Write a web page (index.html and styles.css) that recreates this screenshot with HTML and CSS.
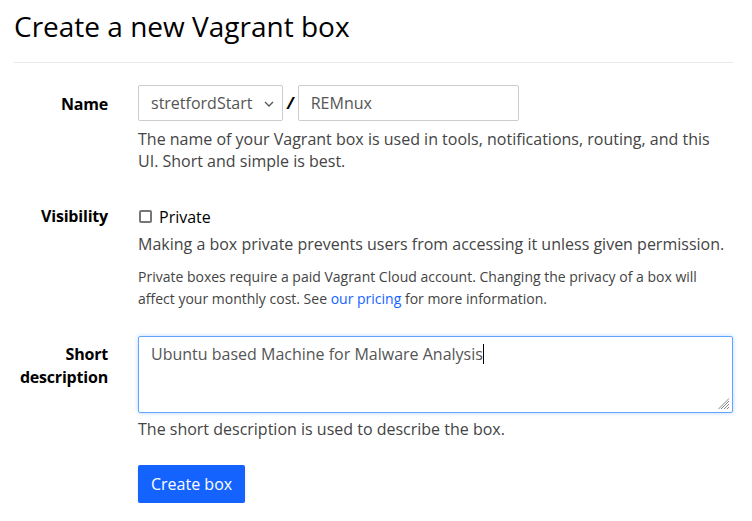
FILE: index.html
```html
<!DOCTYPE html>
<html lang="en">
<head>
<meta charset="utf-8">
<title>Create a new Vagrant box</title>
<link rel="stylesheet" href="styles.css">
</head>
<body>
<div class="page">
  <h1 class="title">Create a new Vagrant box</h1>
  <hr class="rule">
  <form class="form">
    <div class="row row-name">
      <label class="label">Name</label>
      <div class="field">
        <div class="name-inputs">
          <div class="select">
            <span>stretfordStart</span>
            <svg class="chev" width="10" height="6" viewBox="0 0 10 6"><path d="M1 1l4 4 4-4" fill="none" stroke="#555" stroke-width="1.3"/></svg>
          </div>
          <span class="slash">/</span>
          <div class="input">REMnux</div>
        </div>
        <p class="help">The name of your Vagrant box is used in tools, notifications, routing, and this UI. Short and simple is best.</p>
      </div>
    </div>
    <div class="row row-vis">
      <label class="label">Visibility</label>
      <div class="field">
        <div class="check"><span class="box"></span><span class="check-text">Private</span></div>
        <p class="help">Making a box private prevents users from accessing it unless given permission.</p>
        <p class="small">Private boxes require a paid Vagrant Cloud account. Changing the privacy of a box will affect your monthly cost. See <a class="link" href="#">our pricing</a> for more information.</p>
      </div>
    </div>
    <div class="row row-desc">
      <label class="label">Short description</label>
      <div class="field">
        <div class="textarea"><span>Ubuntu based Machine for Malware Analysis</span><span class="caret"></span>
          <svg class="grip" width="12" height="12" viewBox="0 0 12 12"><path d="M11 3L3 11M11 6L6 11M11 9L9 11M11 0.5L0.5 11" stroke="#888" stroke-width="1"/></svg>
        </div>
        <p class="help">The short description is used to describe the box.</p>
        <button class="btn" type="button">Create box</button>
      </div>
    </div>
  </form>
</div>
</body>
</html>
```

FILE: styles.css
```css
html, body {
  margin: 0;
  padding: 0;
  background: #fff;
}
body {
  font-family: "Open Sans", "Liberation Sans", sans-serif;
  color: #1f2124;
}
.page {
  padding: 0 19px 0 14px;
}
.title {
  margin: 0;
  padding-top: 7px;
  font-size: 28px;
  font-weight: 400;
  line-height: 38px;
  color: #000;
}
.rule {
  margin: 17px 0 0;
  border: 0;
  border-top: 1px solid #e8e8e8;
}
.form {
  padding-top: 22px;
}
.row {
  display: grid;
  grid-template-columns: 94px 1fr;
  column-gap: 30px;
}
.row-name { margin-bottom: 33px; }
.row-vis { margin-bottom: 26px; }
.label {
  text-align: right;
  font-weight: 700;
  font-size: 16px;
  line-height: 23px;
  letter-spacing: -0.2px;
  color: #000;
}
.row-name .label { padding-top: 8px; }
.row-desc .label { padding-top: 7px; }
.name-inputs {
  display: flex;
  align-items: center;
}
.select {
  box-sizing: border-box;
  width: 145px;
  height: 36px;
  border: 1px solid #ccc;
  border-radius: 2px;
  display: flex;
  align-items: center;
  justify-content: space-between;
  padding: 0 8px 0 12px;
  font-size: 16px;
  color: #555;
}
.chev { margin-top: 1px; }
.slash {
  font-weight: 700;
  font-style: italic;
  font-size: 16px;
  color: #000;
  margin: 0 4px 0 4px;
}
.input {
  box-sizing: border-box;
  width: 221px;
  height: 36px;
  border: 1px solid #ccc;
  border-radius: 2px;
  padding: 0 12px;
  display: flex;
  align-items: center;
  font-size: 16px;
  color: #555;
}
.help {
  margin: 7px 0 0;
  font-size: 16px;
  line-height: 22px;
  color: #444;
}
.check {
  display: flex;
  align-items: center;
  height: 23px;
  font-size: 16px;
  color: #000;
}
.box {
  box-sizing: border-box;
  width: 13px;
  height: 13px;
  border: 2px solid #767676;
  border-radius: 2px;
  margin: 0 7px 0 1px;
}
.row-vis .help { margin-top: 5px; }
.small {
  margin: 11px 0 0;
  max-width: 570px;
  font-size: 14px;
  line-height: 22px;
  color: #444;
}
.link {
  color: #1563ff;
  text-decoration: none;
}
.textarea {
  position: relative;
  box-sizing: border-box;
  height: 77px;
  border: 1px solid #63a4ff;
  border-radius: 2px;
  box-shadow: 0 0 4px rgba(99, 164, 255, 0.45);
  padding: 5px 12px;
  font-size: 16px;
  line-height: 24px;
  color: #555;
}
.caret {
  display: inline-block;
  width: 1px;
  height: 20px;
  background: #000;
  vertical-align: -4px;
}
.grip {
  position: absolute;
  right: 2px;
  bottom: 2px;
}
.row-desc .help { margin-top: 5px; }
.btn {
  margin-top: 25px;
  height: 38px;
  padding: 0 13px;
  border: 0;
  border-radius: 2px;
  background: #1563ff;
  color: #fff;
  font-family: "Open Sans", "Liberation Sans", sans-serif;
  font-size: 16px;
  box-shadow: 0 1px 2px rgba(0,0,0,0.15);
}
```
